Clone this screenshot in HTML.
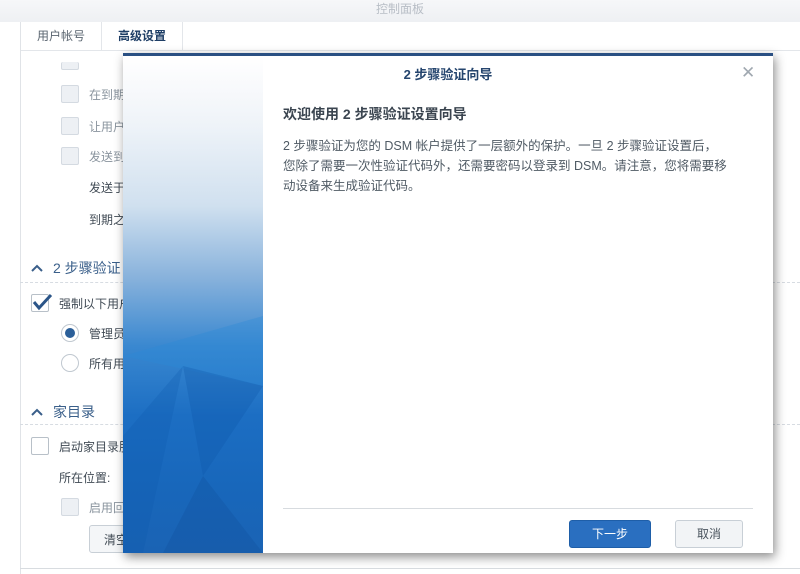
<!DOCTYPE html>
<html><head><meta charset="utf-8"><style>
*{margin:0;padding:0;box-sizing:border-box}
body{width:800px;height:574px;overflow:hidden;background:#fff;font-family:"Liberation Sans","Noto Sans CJK SC",sans-serif;font-size:12px;color:#414b55;position:relative}
.abs{position:absolute}
.top{left:0;top:0;width:800px;height:22px;background:linear-gradient(#f6f7f9,#eef0f3);text-align:center;color:#b8bec6;font-size:12px;line-height:18px}
.main{left:20px;top:22px;width:780px;height:552px;background:#fff;border-left:1px solid #e0e3e7}
.tabs{left:21px;top:22px;width:780px;height:29px;border-bottom:1px solid #e3e6ea}
.tab{position:absolute;top:0;height:29px;line-height:28px;font-size:12px;padding:0 16px;border-right:1px solid #e3e6ea}
.cb{width:18px;height:18px;border:1px solid #d4dae1;background:#edf0f4;border-radius:2px}
.cbw{width:18px;height:18px;border:1px solid #b8c0c8;background:#fff;border-radius:2px}
.t{color:#8a949e;font-size:12px}
.t2{color:#414b55;font-size:12px}
.sec{font-size:14px;color:#3a5f8a}
.dash{height:0;border-top:1px dashed #d7dce2}
.dlg{left:123px;top:53px;width:650px;height:500px;background:#fff;border-top:3px solid #2a5083;box-shadow:2px 4px 10px rgba(0,0,0,.45)}
.side{left:0;top:0;width:140px;height:497px;background:linear-gradient(180deg,#fff 0px,#f6f8fb 40px,#eef3f8 70px,#d0e0ef 150px,#8ab3dc 220px,#3a88d0 290px,#1c6ec3 360px,#1867bb 430px,#1a63b4 497px)}
.btn{position:absolute;top:464px;height:28px;width:82px;border-radius:3px;text-align:center;line-height:26px;font-size:12px}
</style></head><body>
<div class="abs top">控制面板</div>
<div class="abs main"></div>
<div class="abs tabs">
<div class="tab" style="left:0;color:#5a6570">用户帐号</div>
<div class="tab" style="left:81px;color:#1e3e66;font-weight:bold">高级设置</div>
</div>
<div class="abs cb" style="left:61px;top:62px;height:8px;border-top:none"></div>
<div class="abs cb" style="left:61px;top:85px"></div><div class="abs t" style="left:89px;top:86px">在到期</div>
<div class="abs cb" style="left:61px;top:117px"></div><div class="abs t" style="left:89px;top:118px">让用户</div>
<div class="abs cb" style="left:61px;top:147px"></div><div class="abs t" style="left:89px;top:148px">发送到</div>
<div class="abs t2" style="left:89px;top:179px">发送于</div>
<div class="abs t2" style="left:89px;top:211px">到期之</div>
<svg class="abs" style="left:30px;top:263px" width="14" height="10"><path d="M2 8l5-5 5 5" stroke="#3a5f8a" stroke-width="2" fill="none"/></svg>
<div class="abs sec" style="left:53px;top:258px">2 步骤验证</div>
<div class="abs dash" style="left:20px;top:282px;width:780px"></div>
<div class="abs cbw" style="left:31px;top:294px"></div>
<svg class="abs" style="left:31px;top:292px" width="22" height="20"><path d="M3 10l5 6L20 3" stroke="#2b5588" stroke-width="3" fill="none"/></svg>
<div class="abs t2" style="left:59px;top:295px">强制以下用户</div>
<div class="abs" style="left:61px;top:324px;width:18px;height:18px;border:1px solid #c0c8d0;border-radius:50%;background:#fff"><div style="margin:3px;width:10px;height:10px;border-radius:50%;background:#2b5f99"></div></div>
<div class="abs t2" style="left:89px;top:325px">管理员</div>
<div class="abs" style="left:61px;top:354px;width:18px;height:18px;border:1px solid #c0c8d0;border-radius:50%;background:#fff"></div>
<div class="abs t2" style="left:89px;top:355px">所有用</div>
<svg class="abs" style="left:30px;top:407px" width="14" height="10"><path d="M2 8l5-5 5 5" stroke="#3a5f8a" stroke-width="2" fill="none"/></svg>
<div class="abs sec" style="left:53px;top:402px">家目录</div>
<div class="abs dash" style="left:20px;top:424px;width:780px"></div>
<div class="abs cbw" style="left:31px;top:437px"></div>
<div class="abs t2" style="left:59px;top:438px">启动家目录服</div>
<div class="abs t2" style="left:59px;top:469px">所在位置:</div>
<div class="abs cb" style="left:61px;top:498px"></div><div class="abs t" style="left:89px;top:499px">启用回</div>
<div class="abs" style="left:89px;top:525px;width:60px;height:28px;border:1px solid #c8cfd6;border-radius:3px;background:#f4f6f8;padding:5px 14px;white-space:nowrap">清空</div>
<div class="abs" style="left:20px;top:568px;width:780px;border-top:1px solid #d8dce0"></div>
<div class="abs dlg">
<div class="abs side"></div>
<svg class="abs" style="left:0;top:0" width="140" height="497"><polygon points="0,300 140,260 140,330" fill="#2a8ad6" opacity=".35"/><polygon points="60,310 140,330 80,420" fill="#0e55a8" opacity=".3"/><polygon points="0,380 60,310 20,497 0,497" fill="#0d58aa" opacity=".25"/><polygon points="80,420 140,497 40,497" fill="#0f4e9c" opacity=".3"/></svg>
<div class="abs" style="left:0;top:8px;width:650px;text-align:center;font-size:13px;color:#25456e;font-weight:bold">2 步骤验证向导</div>
<div class="abs" style="left:618px;top:7px;font-size:17px;color:#a0a8b0">✕</div>
<div class="abs" style="left:160px;top:48px;font-size:14px;font-weight:bold;color:#3b4550">欢迎使用 2 步骤验证设置向导</div>
<div class="abs" style="left:160px;top:80px;width:480px;white-space:nowrap;font-size:12.5px;line-height:20px;color:#4f5a64">2 步骤验证为您的 DSM 帐户提供了一层额外的保护。一旦 2 步骤验证设置后，<br>您除了需要一次性验证代码外，还需要密码以登录到 DSM。请注意，您将需要移<br>动设备来生成验证代码。</div>
<div class="abs" style="left:160px;top:452px;width:470px;border-top:1px solid #d7dbdf"></div>
<div class="btn" style="left:446px;background:#2a6fc0;border:1px solid #1e5ea8;color:#fff">下一步</div>
<div class="btn" style="left:552px;width:68px;background:#f2f4f6;border:1px solid #c8cfd6;color:#4a545e">取消</div>
</div>
</body></html>
